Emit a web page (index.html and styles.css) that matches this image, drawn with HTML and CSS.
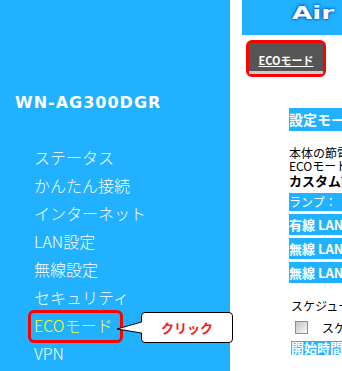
FILE: index.html
```html
<!DOCTYPE html>
<html lang="ja">

<head>
    <meta charset="UTF-8">
    <title>ECOモード</title>
    <link rel="stylesheet" href="styles.css">
</head>

<body>
    <div class="page">
        <aside class="side">
            <div class="model">WN-AG300DGR</div>
            <ul class="menu">
                <li>ステータス</li>
                <li>かんたん接続</li>
                <li>インターネット</li>
                <li>LAN設定</li>
                <li>無線設定</li>
                <li>セキュリティ</li>
                <li class="current">ECOモード<span class="mark"></span></li>
                <li>VPN</li>
            </ul>
            <!-- annotation bubble -->
            <svg class="pointer" width="27" height="15" viewBox="0 0 27 15">
                <polygon points="1,9 26,2 26,13" fill="#fff" />
                <polyline points="25.5,2 1,9 25.5,13" fill="none" stroke="#000" stroke-width="1" />
            </svg>
            <div class="callout">クリック</div>
        </aside>

        <main class="main">
            <header class="top"><span class="logo">Air</span><span class="logo logo-rest">Station</span></header>
            <div class="tabs">
                <div class="tab-mark"><a class="tab">ECOモード</a></div>
            </div>
            <section class="content">
                <div class="title-bar">設定モード</div>
                <p class="lead">本体の節電機能を設定します。<br>ECOモードを使用すると消費電力を抑えます。</p>
                <div class="sub">カスタム設定</div>
                <div class="rows">
                    <div class="row row-thin">ランプ：</div>
                    <div class="row">有線 LANポート：</div>
                    <div class="row">無線 LAN (2.4GHz)：</div>
                    <div class="row">無線 LAN (5GHz)：</div>
                </div>
                <div class="sched">スケジュール</div>
                <div class="check"><span class="box"></span>スケジュールを使用する</div>
                <div class="time-bar">開始時間</div>
            </section>
        </main>
    </div>
</body>

</html>
```

FILE: styles.css
```css
html,
body {
    margin: 0;
    overflow: hidden;
}

body {
    font-family: "Noto Sans CJK JP", sans-serif;
    background-color: #fff;
    color: #000;
}

.page {
    display: flex;
    width: 600px;
    height: 371px;
}

/* left menu */
.side {
    position: relative;
    flex: 0 0 230px;
    box-sizing: border-box;
    padding-top: 93px;
    background-color: #22b1ff;
    color: #fff;
}

.model {
    font-family: "DejaVu Sans", sans-serif;
    font-weight: bold;
    font-size: 16px;
    line-height: 20px;
    letter-spacing: 1px;
    padding-left: 15px;
}

.menu {
    list-style: none;
    margin: 30px 0 0;
    padding: 0 0 0 34px;
}

.menu li {
    position: relative;
    height: 28px;
    line-height: 28px;
    font-size: 16px;
    font-weight: 300;
}

.menu li.current {
    color: #ffff00;
}

.mark {
    position: absolute;
    left: -6px;
    top: -1px;
    width: 95px;
    height: 33px;
    box-sizing: border-box;
    border: 3px solid #f00;
    border-radius: 6px;
}

.pointer {
    position: absolute;
    left: 116px;
    top: 320px;
    z-index: 2;
}

.callout {
    position: absolute;
    left: 141px;
    top: 312px;
    width: 92px;
    height: 31px;
    box-sizing: border-box;
    border: 1px solid #000;
    border-radius: 4px;
    background-color: #fff;
    color: #f41c1c;
    font-weight: bold;
    font-size: 13px;
    line-height: 29px;
    text-align: center;
}

/* right side */
.main {
    flex: 0 0 340px;
    margin-left: 12px;
}

.top {
    display: flex;
    height: 35px;
    padding-left: 50px;
    background-color: #22b1ff;
    white-space: nowrap;
}

.logo {
    display: inline-block;
    font-family: "DejaVu Sans", sans-serif;
    font-weight: bold;
    font-size: 18px;
    line-height: 26px;
    color: #fff;
    transform: scaleX(1.45);
    transform-origin: left center;
    text-shadow: 0 0 2px #0050c0, 0 0 3px #0050c0;
}

.logo-rest {
    margin-left: 30px;
}

.tabs {
    margin: 5px 0 0 4px;
}

.tab-mark {
    display: inline-block;
    border: 3px solid #f00;
    border-radius: 6px;
}

.tab {
    display: block;
    width: 74px;
    height: 22px;
    padding-top: 6px;
    background-color: #555;
    border-bottom: 3px solid #ccc;
    color: #fff;
    font-size: 11px;
    font-weight: bold;
    line-height: 22px;
    text-align: center;
    text-decoration: underline;
}

.content {
    margin-top: 31px;
    padding-left: 47px;
}

.title-bar {
    height: 23px;
    line-height: 23px;
    background-color: #22b1ff;
    color: #fff;
    font-size: 14px;
    font-weight: bold;
}

.lead {
    margin: 15px 0 0;
    font-size: 12px;
    line-height: 13px;
    white-space: nowrap;
}

.sub {
    margin-top: 2px;
    font-size: 13px;
    line-height: 14px;
    font-weight: bold;
}

.rows {
    display: flex;
    flex-direction: column;
    gap: 3px;
    margin-top: 5px;
}

.row {
    height: 21px;
    line-height: 21px;
    background-color: #22b1ff;
    color: #fff;
    font-size: 13px;
    font-weight: bold;
    white-space: nowrap;
}

.row-thin {
    height: 18px;
    line-height: 18px;
    font-size: 12px;
    font-weight: normal;
}

.sched {
    margin-top: 17px;
    padding-left: 2px;
    font-size: 12px;
    line-height: 12px;
}

.check {
    display: flex;
    align-items: center;
    margin-top: 9px;
    padding-left: 6px;
    font-size: 12px;
    line-height: 13px;
    white-space: nowrap;
}

.box {
    width: 13px;
    height: 13px;
    box-sizing: border-box;
    margin-right: 14px;
    border: 1px solid #8c8c8c;
    background: linear-gradient(135deg, #c4c4c4, #f6f6f6);
}

.time-bar {
    height: 14px;
    margin: 7px 0 0 2px;
    line-height: 14px;
    background-color: #22b1ff;
    color: #fff;
    font-size: 13px;
    font-weight: bold;
    white-space: nowrap;
}
```
